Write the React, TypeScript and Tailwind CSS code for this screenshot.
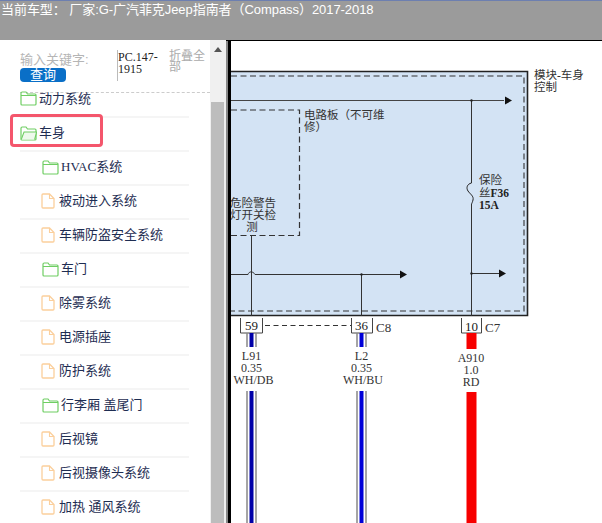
import React from "react";

const CJK = "font-['Liberation_Sans','Noto_Sans_CJK_SC',sans-serif]";

function Folder({ open }: { open?: boolean }) {
  return (
    <svg width="17" height="15" viewBox="0 0 17 15" fill="none" className="shrink-0">
      <path d="M1 13V2.2C1 1.5 1.5 1 2.2 1H6L7.5 3H15C15.6 3 16 3.4 16 4V13C16 13.6 15.6 14 15 14H2C1.4 14 1 13.6 1 13Z" stroke="#6fce63" strokeWidth="1.2" fill="#fff" />
      {open ? (
        <path d="M1.2 13.6L4 6H16.6L14.6 13.6" stroke="#6fce63" strokeWidth="1.1" fill="#eef9ec" />
      ) : (
        <path d="M1 4.5H16" stroke="#6fce63" strokeWidth="1" />
      )}
    </svg>
  );
}

function FileIcon() {
  return (
    <svg width="14" height="16" viewBox="0 0 14 16" fill="none" className="shrink-0">
      <path d="M1 2C1 1.4 1.4 1 2 1H8.5L13 5.5V14C13 14.6 12.6 15 12 15H2C1.4 15 1 14.6 1 14Z" stroke="#fbcf9c" strokeWidth="1.3" fill="#fff" />
      <path d="M8.5 1V5.5H13" stroke="#fbcf9c" strokeWidth="1.1" />
    </svg>
  );
}

type Row = { t: string; icon: "folder" | "open" | "file"; level: 0 | 1 };

const rows: Row[] = [
  { t: "动力系统", icon: "folder", level: 0 },
  { t: "车身", icon: "open", level: 0 },
  { t: "HVAC系统", icon: "folder", level: 1 },
  { t: "被动进入系统", icon: "file", level: 1 },
  { t: "车辆防盗安全系统", icon: "file", level: 1 },
  { t: "车门", icon: "folder", level: 1 },
  { t: "除雾系统", icon: "file", level: 1 },
  { t: "电源插座", icon: "file", level: 1 },
  { t: "防护系统", icon: "file", level: 1 },
  { t: "行李厢 盖尾门", icon: "folder", level: 1 },
  { t: "后视镜", icon: "file", level: 1 },
  { t: "后视摄像头系统", icon: "file", level: 1 },
  { t: "加热 通风系统", icon: "file", level: 1 },
];

function Diagram() {
  const serif = "'Liberation Serif','Noto Sans CJK SC',serif";
  const T = ({ x, y, s = 11.5, a = "start", c = "#333", w = 400, children }: { x: number; y: number; s?: number; a?: "start" | "middle"; c?: string; w?: number; children: React.ReactNode }) => (
    <text x={x} y={y} fontSize={s} textAnchor={a} fill={c} fontWeight={w} fontFamily={serif}>{children}</text>
  );
  const arrow = (x: number, y: number) => <path d={`M${x} ${y - 4}L${x + 7} ${y}L${x} ${y + 4}Z`} fill="#111" />;
  const wire = (x: number, y: number, h: number, core: string) => (
    <g>
      <path d={`M${x - 4.5} ${y}v${h}M${x + 4.5} ${y}v${h}`} stroke="#888" strokeWidth="1.5" />
      <rect x={x - 2} y={y} width="4" height={h} fill={core} />
    </g>
  );
  return (
    <svg width="371" height="483" viewBox="231 40 371 483" className="block">
      <rect x="231" y="71" width="297" height="245" fill="#d3e3f4" stroke="none" />
      <path d="M231 71.5H527.5V315.5H231" fill="none" stroke="#222" strokeWidth="1.6" />
      <path d="M231 76H524V311H231" fill="none" stroke="#333" strokeWidth="1.1" strokeDasharray="6 3.5" />
      <path d="M231 100.5H504" stroke="#444" strokeWidth="1.2" />
      {arrow(505, 100.5)}
      <path d="M471.5 100V183M471.5 204V316" stroke="#333" strokeWidth="1" />
      <path d="M471.5 183C467 184 466 188 468 191C470 194 474 196 473 200C472.5 202 472 203 471.5 204" fill="none" stroke="#222" strokeWidth="1" />
      <circle cx="471.5" cy="100.5" r="1.2" fill="#222" />
      <path d="M471.5 273.5H500" stroke="#333" strokeWidth="1" />
      {arrow(499, 273.5)}
      <circle cx="471.5" cy="273.5" r="1.2" fill="#222" />
      <path d="M231 110H299.5V235.5H231" fill="none" stroke="#333" strokeWidth="1.2" strokeDasharray="6 3.5" />
      <path d="M231 274.5H248C249 271 253 271 255 274.5H400" fill="none" stroke="#333" strokeWidth="1" />
      {arrow(400, 274.5)}
      <path d="M251.5 236V316M361.5 274V316" stroke="#333" strokeWidth="1" />
      <circle cx="361.5" cy="274.5" r="1.2" fill="#222" />

      <T x={304} y={119}>电路板（不可维</T>
      <T x={304} y={131}>修）</T>
      <T x={253} y={207} a="middle">危险警告</T>
      <T x={253} y={219} a="middle">灯开关检</T>
      <T x={252} y={231} a="middle">测</T>
      <T x={479} y={184}>保险</T>
      <T x={479} y={197}>丝<tspan fontWeight="700" fontSize="11.5" fill="#222">F36</tspan></T>
      <T x={479} y={209} s={11.5} w={700} c="#222">15A</T>
      <T x={534} y={79}>模块-车身</T>
      <T x={534} y={91}>控制</T>

      <path d="M240.5 318V333H262.5V318" fill="none" stroke="#444" strokeWidth="1" />
      <path d="M351.5 318V333H372.5V318" fill="none" stroke="#444" strokeWidth="1" />
      <path d="M461.5 318V333H481.5V318" fill="none" stroke="#444" strokeWidth="1" />
      <path d="M265 325.5H351" stroke="#333" strokeWidth="1.1" strokeDasharray="5 3.5" />
      <T x={251.5} y={330} s={13} a="middle" c="#222">59</T>
      <T x={361.5} y={330} s={13} a="middle" c="#222">36</T>
      <T x={471.5} y={331} s={13} a="middle" c="#222">10</T>
      <T x={376} y={332} s={13}>C8</T>
      <T x={485} y={332} s={13}>C7</T>

      {wire(251.5, 333, 14, "#0000a8")}
      {wire(361.5, 333, 14, "#0000d8")}
      <rect x="466.5" y="333" width="10" height="16" fill="#f70000" />

      <T x={251.5} y={360} s={12} a="middle">L91</T>
      <T x={251.5} y={372} s={12} a="middle">0.35</T>
      <T x={253.5} y={384} s={12} a="middle">WH/DB</T>
      <T x={361.5} y={360} s={12} a="middle">L2</T>
      <T x={361.5} y={372} s={12} a="middle">0.35</T>
      <T x={363} y={384} s={12} a="middle">WH/BU</T>
      <T x={471} y={362} s={12} a="middle">A910</T>
      <T x={471} y={374} s={12} a="middle">1.0</T>
      <T x={471} y={386} s={12} a="middle">RD</T>

      {wire(251.5, 391, 132, "#0000a8")}
      {wire(361.5, 391, 132, "#0000d8")}
      <rect x="466.5" y="392" width="10" height="131" fill="#f70000" />
    </svg>
  );
}

export default function App() {
  return (
    <div className={`relative h-[523px] w-[602px] overflow-hidden bg-white ${CJK}`}>
      <div className="h-[40px] border-t border-[#6d7fb0] bg-[#9b9b9b] pt-[1px] pl-[1px]">
        <div className="text-[13px] leading-[15px] tracking-[-0.06px] text-white">当前车型： 厂家:G-广汽菲克Jeep指南者（Compass）2017-2018</div>
      </div>
      <div className="flex h-[483px]">
        <div className="w-[210px] shrink-0 overflow-hidden">
          <div className="flex h-[52px] items-start pt-[10px] pl-[20px]">
            <div className="w-[97px] pt-[2px]">
              <div className="text-[13px] leading-[15px] text-[#b5b5b5]">输入关键字:</div>
              <button className="mt-[1px] block h-[14px] w-[46px] rounded-[4px] bg-[#0a6fc7] text-center text-[13px] leading-[14px] text-white">查询</button>
            </div>
            <div className="h-[31px] w-[52px] border-l border-[#bbb] pt-[1px] font-['Liberation_Serif',serif] text-[12px] leading-[12px] text-[#222]">PC.147-1915</div>
            <div className="w-[38px] pt-[1px] text-[12px] leading-[11px] text-[#aaa]">折叠全部</div>
          </div>
          <div className="ml-[20px] border-t border-dashed border-[#ccc]" />
          {rows.map((r, i) => (
            <div
              key={r.t}
              className={`flex ml-[20px] w-[169px] items-center border-b-2 border-[#f5f5f5] pb-[2px] ${i === 0 ? "-mt-[10px] h-[35px]" : "h-[34px]"} ${r.level === 1 ? (r.icon === "file" ? "pl-[21px]" : "pl-[22px]") : ""} text-[13px] text-[#1e2d52]`}
            >
              {r.icon === "file" ? <FileIcon /> : <Folder open={r.icon === "open"} />}
              <span className={`whitespace-nowrap ${r.t === "HVAC系统" ? "font-['Liberation_Serif','Noto_Sans_CJK_SC',serif]" : ""} ${r.icon === "file" ? "ml-[4px]" : "ml-[2px]"}`}>{r.t}</span>
            </div>
          ))}
        </div>
        <div className="flex w-[16px] shrink-0 flex-col items-start bg-[#f0f0f0]">
          <svg width="8" height="5" viewBox="0 0 8 5" className="mt-[7px] ml-[4px]"><path d="M4 0L8 5H0Z" fill="#555" /></svg>
          <div className="mt-[50px] ml-[1px] w-[13px] flex-1 bg-[#bdbdbd]" />
        </div>
        <div className="w-[5px] shrink-0 border-l-2 border-[#888] bg-black" />
        <div className="flex-1 bg-white">
          <Diagram />
        </div>
      </div>
      <div className="absolute left-[10px] top-[114px] h-[33px] w-[93px] rounded-[4px] border-[3px] border-[#f4566c]" />
      <div className="absolute left-[226px] right-0 top-[40px] h-px bg-black" />
    </div>
  );
}
